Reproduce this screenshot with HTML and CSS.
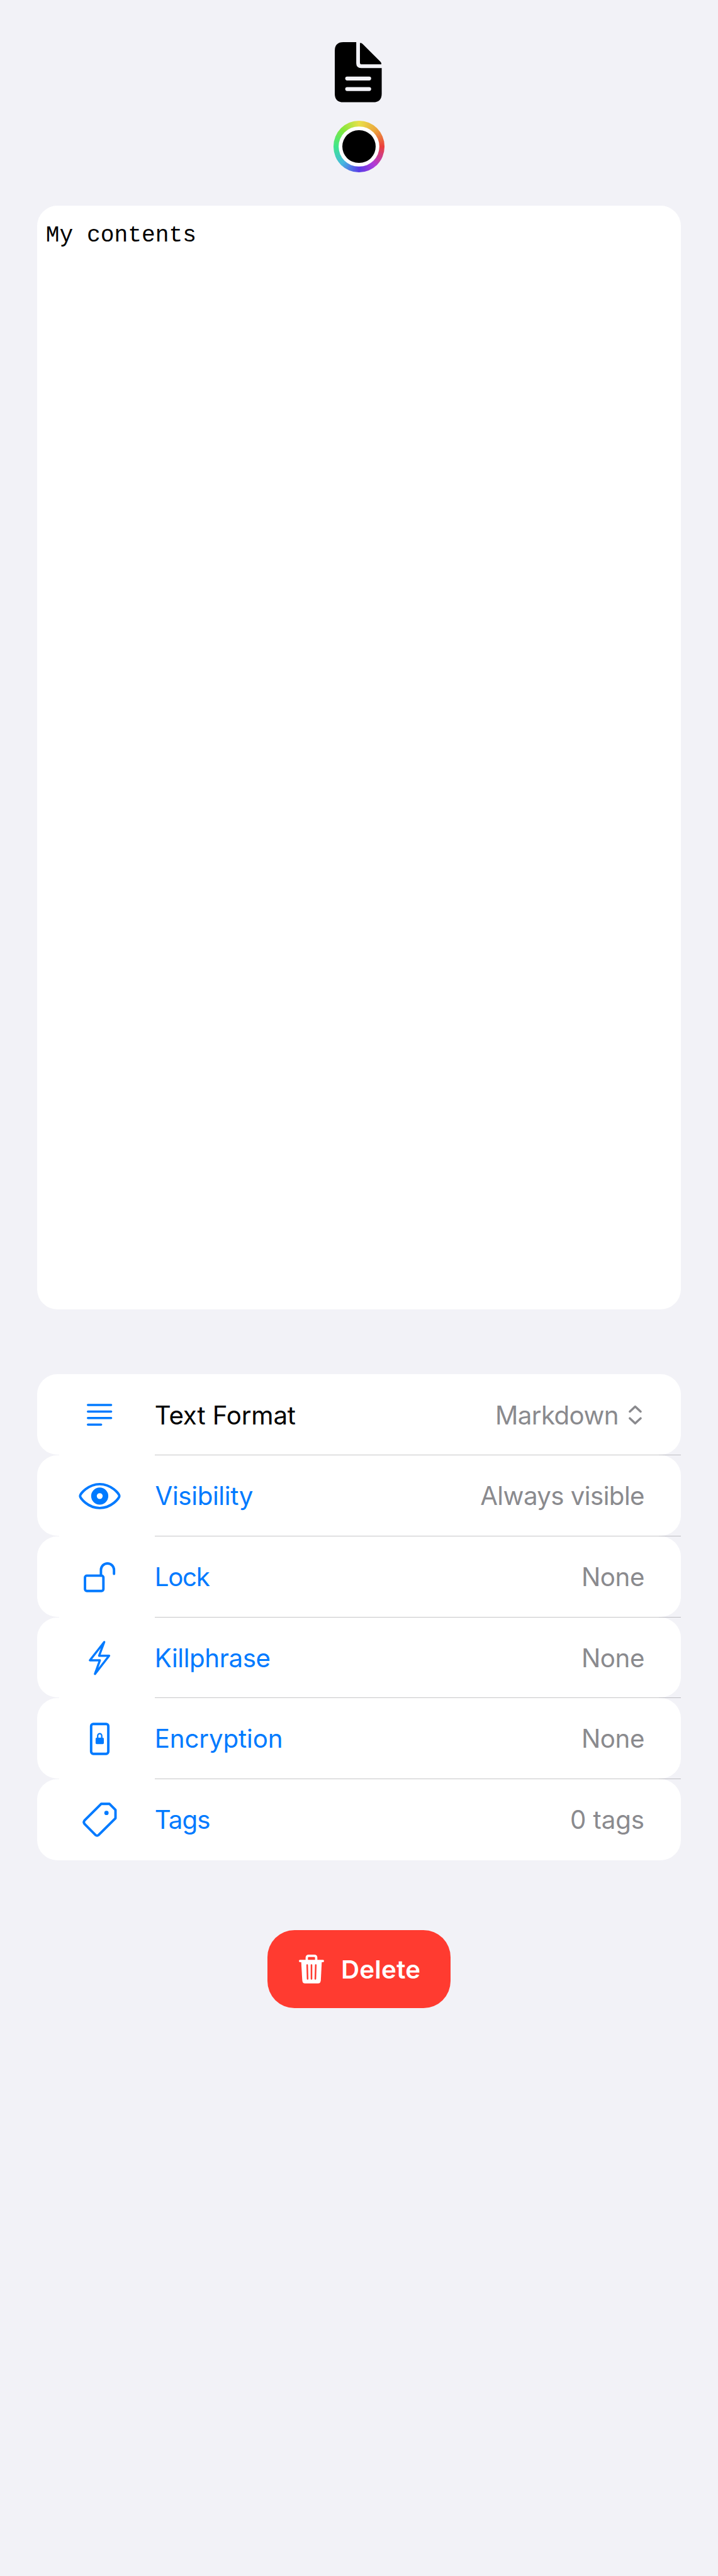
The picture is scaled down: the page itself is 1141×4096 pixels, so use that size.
FILE: index.html
```html
<!DOCTYPE html>
<html lang="en">
<head>
<meta charset="utf-8">
<title>Note</title>
<link rel="stylesheet" href="styles.css">
</head>
<body>
<main class="page">
  <header class="header">
    <svg class="doc" width="78" height="99" viewBox="546 68 78 99" aria-hidden="true">
      <path d="M581 69H560Q546 69 546 83V153Q546 167 560 167H608.500Q622.500 167 622.500 153V111.300H589Q581 111.300 581 103.300Z"/>
      <path d="M587 70.500Q589.500 70 592 72.500L620.500 101Q622.500 103 622 105.300H590Q587 105.300 587 102.300Z"/>
      <path class="doc-lines" d="M566.200 128.300H602.100M566.200 145.500H602.100"/>
    </svg>
    <div class="color-well"><div class="swatch"></div></div>
  </header>

  <section class="editor">My contents</section>

  <section class="list">
    <div class="row">
      <svg class="icon" viewBox="60 0 192 131"><path class="thin" d="M142.800 50.200H180.600M142.800 60.900H180.600M142.800 71.500H180.600M142.800 82.300H164.300"/></svg>
      <span class="label format">Text Format</span>
      <span class="value markdown">Markdown</span>
      <svg class="chevrons" width="24" height="131" viewBox="1023 0 24 131"><path d="M1026 61L1034.700 52.800L1043.500 61M1026 72L1034.700 80.200L1043.500 72"/></svg>
    </div>
    <div class="row">
      <svg class="icon" viewBox="60 0 192 131"><path d="M130 66.500C130 63 143 47 162 47S194 63 194 66.500S181 86 162 86S130 70 130 66.500Z"/><circle class="iris" cx="162" cy="66.500" r="9.400"/></svg>
      <span class="label visibility">Visibility</span>
      <span class="value always">Always visible</span>
    </div>
    <div class="row">
      <svg class="icon" viewBox="60 0 192 131"><rect x="138" y="64" width="30" height="25" rx="3"/><path d="M164 64V54.700a10.650 10.650 0 0 1 21.300 0V61"/></svg>
      <span class="label lock">Lock</span>
      <span class="value none">None</span>
    </div>
    <div class="row">
      <svg class="icon" viewBox="60 0 192 131"><path class="thin" d="M169.300 40L146 69.700H162.300L154.300 92L177.300 62.300H161Z"/></svg>
      <span class="label killphrase">Killphrase</span>
      <span class="value none">None</span>
    </div>
    <div class="row">
      <svg class="icon" viewBox="60 0 192 131"><rect x="148" y="42.300" width="28" height="48.700" rx="3.500"/><rect class="solid" x="155.300" y="64.500" width="13.400" height="10.500" rx="1.800"/><path class="shackle" d="M158.700 65.500V61.300a3.300 3.300 0 0 1 6.600 0V65.500"/></svg>
      <span class="label encryption">Encryption</span>
      <span class="value none">None</span>
    </div>
    <div class="row">
      <svg class="icon" viewBox="60 0 192 131"><path d="M164.300 40.300H178L187.700 50V63.700L160.300 91Q157.700 93 155 91L137.200 73Q135 70 137.200 67.300Z"/><circle class="solid" cx="173" cy="55" r="3.500"/></svg>
      <span class="label tags">Tags</span>
      <span class="value count">0 tags</span>
    </div>
  </section>

  <button class="delete">
    <svg class="trash" width="41" height="47" viewBox="0 0 41 47" aria-hidden="true">
      <path class="trash-line" d="M1.900 10.300H39.100M12.800 10V5Q12.800 1.900 16 1.900H25Q28.200 1.900 28.200 5V10"/>
      <path class="trash-body" d="M3.700 11H37.300L35.700 42Q35.400 47 31 47H10Q5.900 47 5.500 42Z"/>
      <path class="trash-slots" d="M13.500 17L14.200 39.500M20.500 17V39.500M27.500 17L26.800 39.500"/>
    </svg>
    <span class="delete-text">Delete</span>
  </button>
</main>
</body>
</html>
```
FILE: styles.css
```css
html {
  background: #f2f2f7;
}

body {
  margin: 0;
}

.page {
  zoom: 0.9752;
  box-sizing: border-box;
  width: 1170px;
  height: 4200px;
  padding: 68px 60px 0;
  display: flex;
  flex-direction: column;
  align-items: center;
  font-family: Inter, "Liberation Sans", sans-serif;
  font-size: 41.300px;
}

.header {
  display: flex;
  flex-direction: column;
  align-items: center;
  gap: 30px;
}

.doc,
.icon,
.chevrons,
.trash {
  display: block;
  flex: none;
}

.doc-lines {
  fill: none;
  stroke: #f2f2f7;
  stroke-width: 6.400;
  stroke-linecap: round;
}

.color-well {
  width: 84px;
  height: 84px;
  border-radius: 50%;
  display: grid;
  place-items: center;
  background: conic-gradient(#e8e04a, #eba63c 45deg, #eb3f3c 90deg, #b03ad8 140deg, #5a3de8 180deg, #45b8e0 225deg, #3fe68c 270deg, #82e83c 315deg, #e8e04a);
}

.swatch {
  width: 54px;
  height: 54px;
  border-radius: 50%;
  background: #000;
  box-shadow: 0 0 0 6px #fff;
}

.editor {
  box-sizing: border-box;
  width: 1050px;
  height: 1800px;
  margin-top: 54px;
  padding: 25.500px 14.500px;
  border-radius: 33px;
  background: #fff;
  color: #000;
  font: 37.200px/48px "Liberation Mono", monospace;
}

.list {
  width: 1050px;
  margin-top: 106px;
}

.row {
  box-sizing: border-box;
  position: relative;
  height: 131px;
  margin-bottom: 1px;
  padding-right: 60px;
  display: flex;
  align-items: flex-start;
  border-radius: 33px;
  background: #fff;
  line-height: 131px;
  white-space: nowrap;
}

.row:last-child {
  height: 132px;
  margin-bottom: 0;
}

.row:not(:last-child)::before,
.row:not(:last-child)::after {
  content: "";
  position: absolute;
  bottom: -1px;
  height: 1px;
}

.row:not(:last-child)::before {
  left: 36px;
  right: 36px;
  background: #fff;
}

.row:not(:last-child)::after {
  left: 192px;
  right: 0;
  background: rgba(60, 60, 67, 0.29);
}

.icon {
  width: 192px;
  height: 131px;
  fill: none;
  stroke: #007aff;
  stroke-width: 4;
  stroke-linecap: round;
  stroke-linejoin: round;
}

.icon .thin {
  stroke-width: 3.600;
}

.icon .iris {
  stroke-width: 9.200;
}

.icon .shackle {
  stroke-width: 2.300;
}

.icon .solid {
  fill: #007aff;
  stroke: none;
}

.label,
.value {
  padding-top: 1.200px;
}

.label {
  color: #007aff;
}

.value {
  margin-left: auto;
  color: #8a8a8e;
}

.format {
  color: #000;
  letter-spacing: -0.160px;
}

.visibility {
  padding-left: 0.800px;
  letter-spacing: -0.360px;
}

.lock {
  letter-spacing: -1.300px;
}

.killphrase {
  letter-spacing: -0.410px;
}

.encryption {
  letter-spacing: -0.140px;
}

.tags {
  letter-spacing: -0.950px;
}

.markdown {
  letter-spacing: -0.600px;
}

.always {
  letter-spacing: -0.600px;
}

.none {
  letter-spacing: -0.450px;
}

.count {
  letter-spacing: -0.100px;
}

.chevrons {
  margin: 0 3px 0 15px;
  fill: none;
  stroke: #8a8a8e;
  stroke-width: 3.600;
  stroke-linecap: round;
  stroke-linejoin: round;
}

.delete {
  box-sizing: border-box;
  width: 298px;
  height: 127px;
  margin: 114px 0 0;
  padding: 0 0 0 51px;
  display: flex;
  align-items: center;
  gap: 27.700px;
  border: 0;
  border-radius: 44px;
  background: #ff3b30;
  color: #fff;
  font: 600 41.300px/48px Inter, "Liberation Sans", sans-serif;
  letter-spacing: 0.280px;
}

.delete-text {
  padding-top: 3px;
}

.trash-line {
  fill: none;
  stroke: #fff;
  stroke-width: 3.800;
  stroke-linecap: round;
}

.trash-body {
  fill: #fff;
}

.trash-slots {
  fill: none;
  stroke: #ff3b30;
  stroke-width: 2.600;
  stroke-linecap: round;
}
```
